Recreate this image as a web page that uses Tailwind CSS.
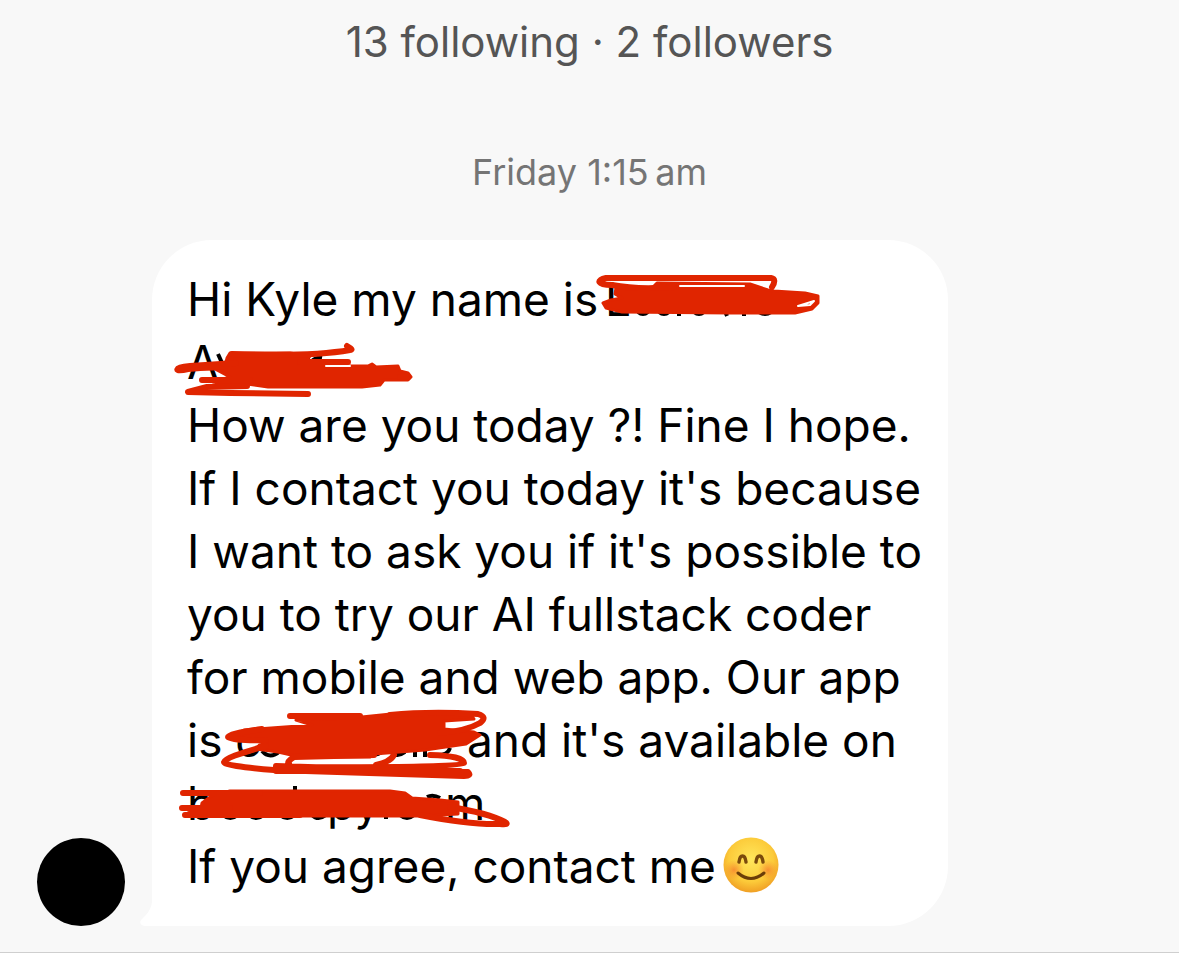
<!DOCTYPE html>
<html lang="en">
<head>
<meta charset="utf-8">
<meta name="viewport" content="width=device-width, initial-scale=1">
<title>Message</title>
<script src="https://cdn.jsdelivr.net/npm/@tailwindcss/browser@4"></script>
</head>
<body class="min-h-screen bg-white font-['Inter','Liberation_Sans',sans-serif]">
<main class="border-b border-[#cfcfcf] bg-[#f8f8f8] pb-[26px]">
  <p class="pt-[14px] text-center text-[42px] leading-[56px] text-[#555]">13 following · 2 followers</p>
  <p class="pt-[78px] text-center text-[36px] leading-[48px] text-[#757575]"><time>Friday 1:15&#8201;am</time></p>
  <div class="mt-[44px] flex items-end pl-[37px]">
    <div class="size-[88px] shrink-0 rounded-full bg-black"></div>
    <article class="relative ml-[27px] w-full max-w-[796px] rounded-[60px] rounded-bl-none bg-white pt-[28px] pb-[28px] pl-[35px] text-[46px] leading-[63px] text-black">
      <p class="whitespace-nowrap">
        <span class="flex"><span class="w-[418px]">Hi Kyle my name is</span><span>L</span></span>
        <span class="block">A</span>
        <span class="block">How are you today ?! Fine I hope.</span>
        <span class="block">If I contact you today it's because</span>
        <span class="block">I want to ask you if it's possible to</span>
        <span class="block">you to try our AI fullstack coder</span>
        <span class="block">for mobile and web app. Our app</span>
        <span class="flex"><span class="w-[280px]">is c</span><span>and it's available on</span></span>
        <span class="flex"><span class="w-[140px]">b</span><span class="w-[118px]">py</span><span>m</span></span>
        <span class="flex items-center">If you agree, contact me
          <svg class="mb-1 ml-[7px] size-[56px]" viewBox="0 0 56 56" role="img" aria-label="Smiling face">
            <defs>
              <radialGradient id="face" cx=".5" cy=".4" r=".62"><stop offset="0" stop-color="#ffe75c"/><stop offset=".65" stop-color="#fccb3a"/><stop offset="1" stop-color="#ef9b22"/></radialGradient>
              <radialGradient id="cheek"><stop offset="0" stop-color="#f4672a" stop-opacity=".6"/><stop offset="1" stop-color="#f4822a" stop-opacity="0"/></radialGradient>
            </defs>
            <circle cx="28" cy="28" r="27.5" fill="url(#face)"/>
            <circle cx="11" cy="33" r="10" fill="url(#cheek)"/><circle cx="45" cy="33" r="10" fill="url(#cheek)"/>
            <path d="M16 25c1-8 6-8 7 0M33 25c1-8 6-8 7 0" fill="none" stroke="#7a4a0c" stroke-width="3.4" stroke-linecap="round"/>
            <path d="M15 36q13 11 26 0" fill="none" stroke="#6b3d08" stroke-width="3" stroke-linecap="round"/>
          </svg>
        </span>
      </p>
      <!-- Tail of the bubble -->
      <svg class="absolute bottom-0 -left-3 h-6 w-4" viewBox="0 0 16 24" aria-hidden="true"><path d="M12 0C11 9 5 14 1 18C-1 21 1 24 5 24H16V0Z" fill="#fff"/></svg>
      <!-- Pen marks over the hidden words -->
      <svg class="pointer-events-none absolute top-0 left-0 h-[686px] w-[796px] overflow-visible" viewBox="152 240 796 686" aria-hidden="true" stroke-linecap="round" stroke-linejoin="round">
        <g fill="none" stroke="#000" stroke-width="4" stroke-linecap="butt">
          <path d="M679 282v6M742 285h4M638 312q5 4 10 0M659 312q5 4 10 0M679 311v5M694 312q5 4 10 0M725 311l2 5M744 311v5M759 312q6 4 12 0"/>
          <path d="M218 354l9 20M236 373h12M298 359h12M312 361q4-4 10-3"/>
          <path d="M262 751q8 9 18 0M350 726v8M368 752q6 5 14 0M391 752q6 6 14 0M415 750v7M425 750v7M438 755q10 0 12-7"/>
          <path d="M295 786v8M223 815q7 6 15 0M249 815q7 6 15 0M280 815q7 6 15 0M312 815q6 6 14 0M384 817h4M400 815q7 6 14 0M427 797q6-3 13 1"/>
        </g>
        <g fill="#e02500" stroke="#e02500" stroke-width="3">
          <path d="M616 288L652 288L657 283L750 284L768 290L774 291L805 293L818 296V303L812 309L795 313H730L622 312L606 308L603 303L611 300L622 298L615 294Z"/>
          <path d="M227 358L230 353H290L310 356L306 361L330 362V366L368 366L372 364L376 367L398 366L400 371L408 373L411 377L408 380H384L380 385L362 387H268L247 384L235 386L213 382L230 377L215 369L202 369L226 362Z"/>
          <path d="M296 720L352 718L391 714L420 713H470L474 719L444 721V729L474 732L480 735L466 744L425 750L374 754L370 757H300L278 752L256 749L262 742L230 737L244 730L312 725Z"/>
          <path d="M202 803L213 795L230 791H390L405 793L412 798L440 800L458 802V814L420 816H240L188 813L201 808Z"/>
        </g>
        <g fill="none" stroke="#e02500" stroke-width="6">
          <path d="M772 287Q777 279 771 278H606C596 280 597 285 612 285Q638 290 674 287"/>
          <path d="M232 354Q310 357 350 350Q354 350 347 346M348 362H300M236 363L190 366C174 367 173 373 188 369L225 366M202 380H250M247 386L207 387L188 392L230 393L308 394M400 377H408"/>
          <path d="M290 716H360M390 715Q430 711 478 714Q488 717 480 723Q466 731 440 733M262 729Q228 734 228 737Q236 741 266 740M266 746Q225 757 224 762Q224 766 274 770L464 776Q472 776 468 772L276 766M289 764Q286 762 294 757L374 755M376 765Q390 762 394 755M430 755Q464 756 464 763Q460 768 300 767M276 771H460"/>
          <path d="M183 793H260M182 808H230M185 815H300M450 807Q488 813 505 822Q510 825 500 824Q470 825 420 815"/>
        </g>
        <path d="M680 286H744M798 306L814 301L810 305ZM326 366H350" fill="none" stroke="#fff" stroke-width="2"/>
      </svg>
    </article>
  </div>
</main>
</body>
</html>
